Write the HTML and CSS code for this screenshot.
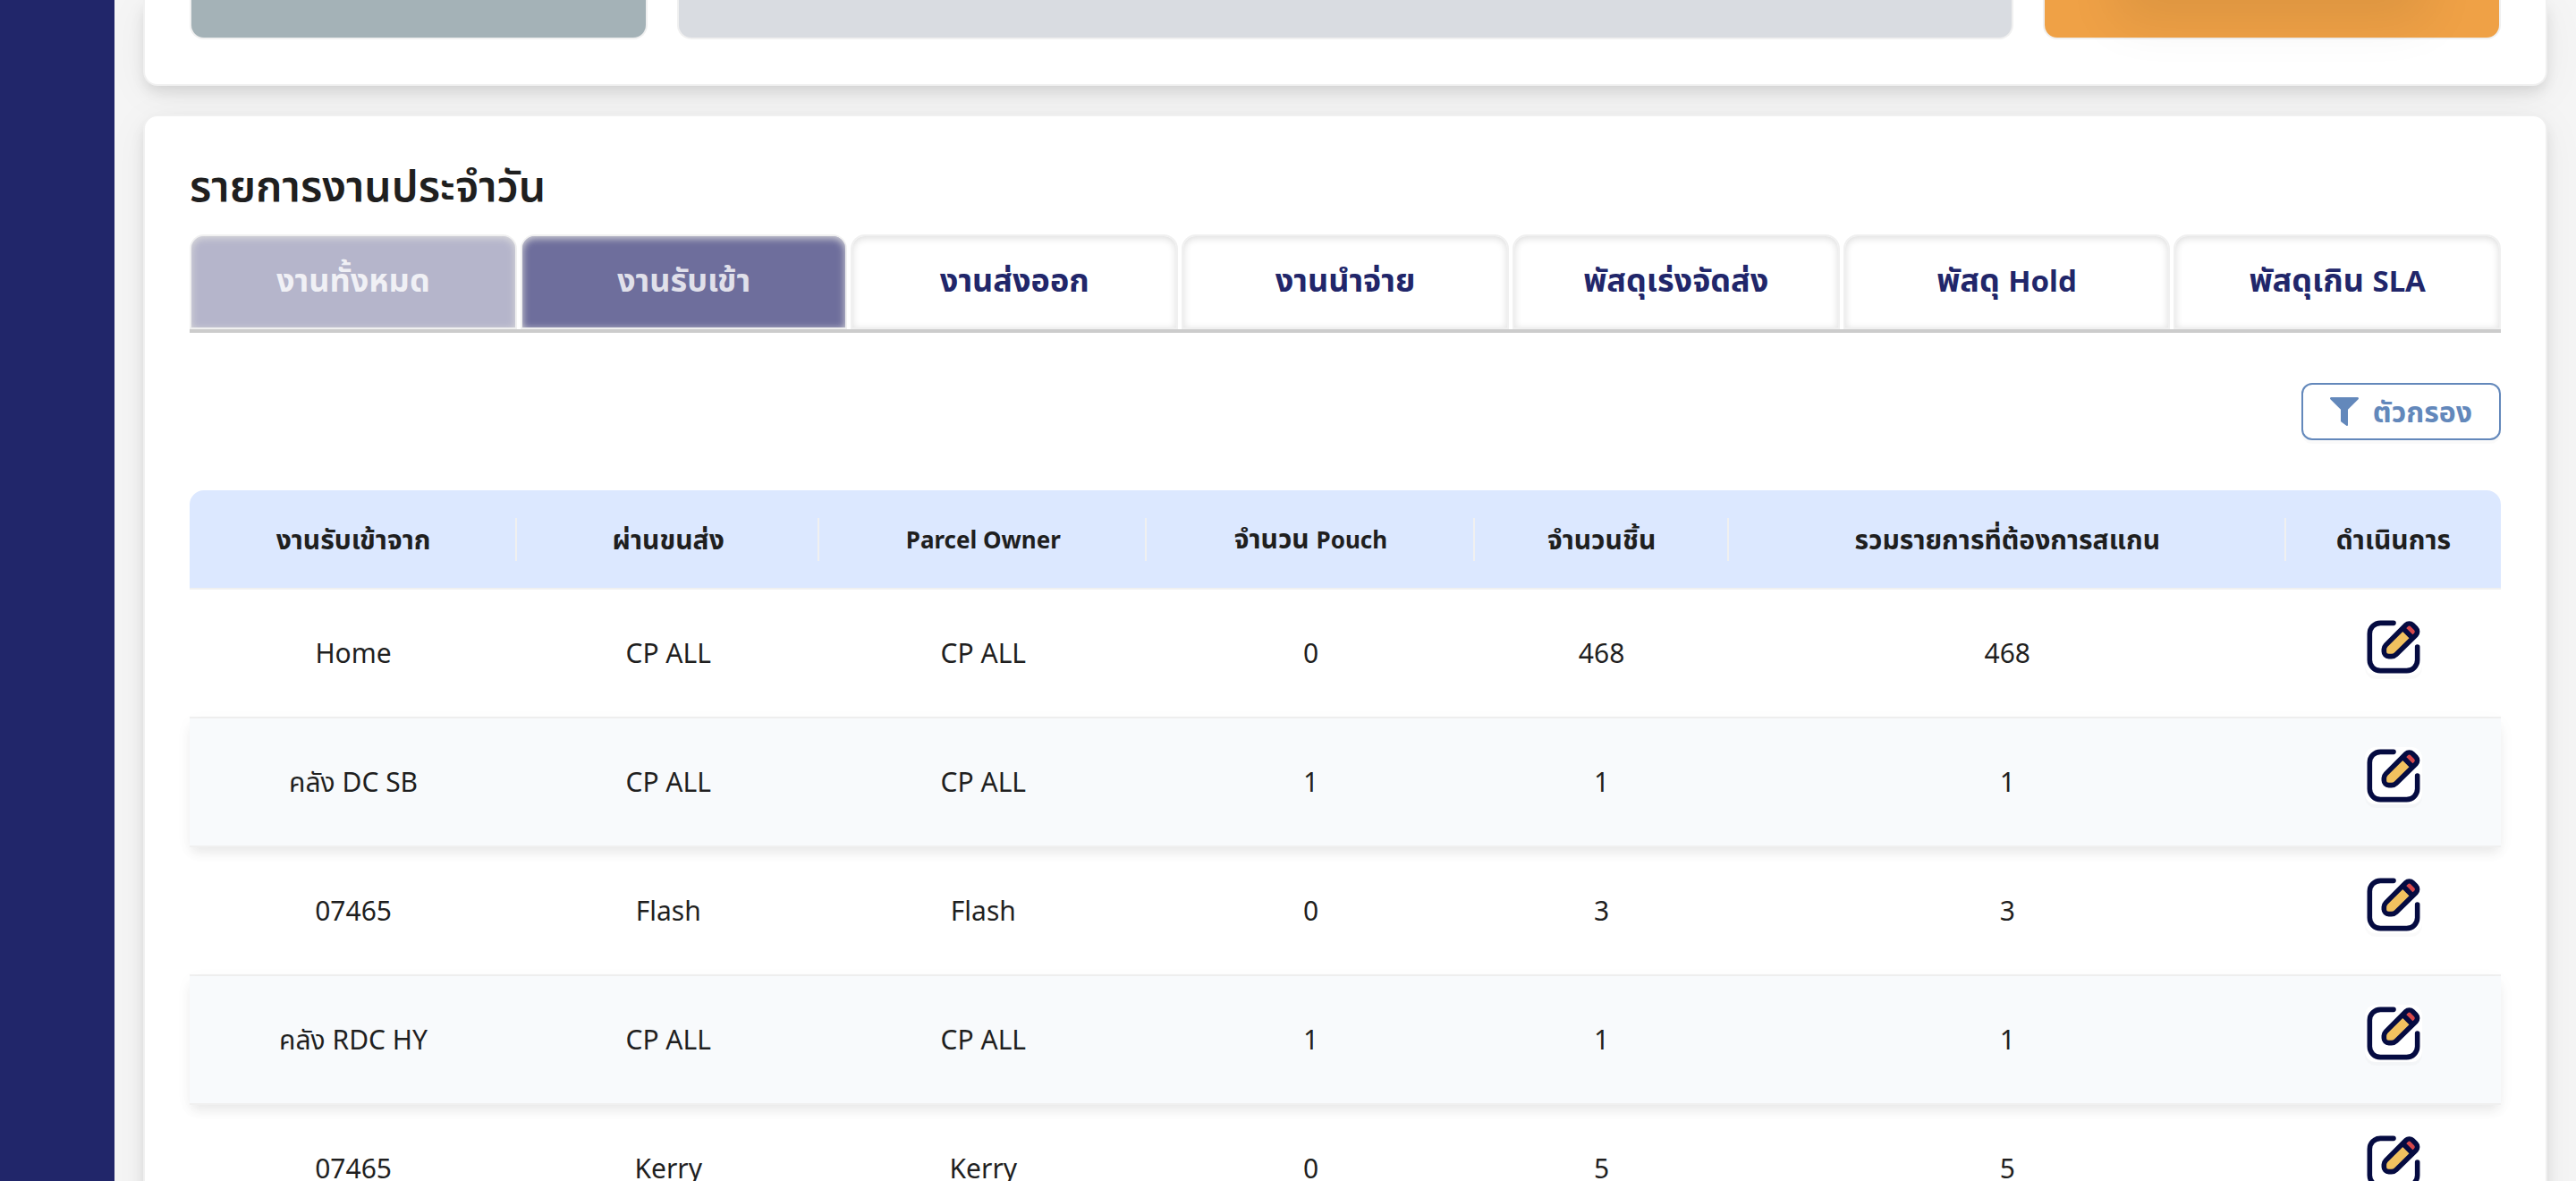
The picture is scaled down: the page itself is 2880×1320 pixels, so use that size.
FILE: index.html
```html
<!DOCTYPE html>
<html lang="th">
<head>
<meta charset="utf-8">
<title>รายการงานประจำวัน</title>
<link rel="stylesheet" href="styles.css">
</head>
<body>
<svg class="sprite" aria-hidden="true">
  <symbol id="edit" viewBox="0 0 24 24">
    <path d="M12 2H6.500a4.500 4.500 0 0 0-4.500 4.500v11a4.500 4.500 0 0 0 4.500 4.500h11a4.500 4.500 0 0 0 4.500-4.500V12" fill="none" stroke="#050b41" stroke-width="2.100" stroke-linecap="round"/>
    <path d="M8.800 11.200L15.850 4.150L20.050 8.350L13.100 15.200a2.800 2.800 0 0 1-2 .8H10a2 2 0 0 1-2-2v-1a2.800 2.800 0 0 1 .8-1.800z" fill="#f1c15f"/>
    <path d="M15.850 4.150L17.200 2.800a2 2 0 0 1 2.800 0L21.400 4.200a2 2 0 0 1 0 2.800L20.050 8.350z" fill="#d5484b"/>
    <path d="M8.800 11.200L17.200 2.800a2 2 0 0 1 2.800 0L21.400 4.200a2 2 0 0 1 0 2.800L13.100 15.200a2.800 2.800 0 0 1-2 .8H10a2 2 0 0 1-2-2v-1a2.800 2.800 0 0 1 .8-1.800zM15.850 4.150L20.050 8.350" fill="none" stroke="#050b41" stroke-width="2.100"/>
  </symbol>
</svg>
<div class="layout">
  <aside class="sidebar"></aside>
  <main class="content">
    <section class="card summary">
      <div class="panel panel-teal"></div>
      <div class="panel panel-grey"></div>
      <div class="panel panel-orange"></div>
    </section>
    <section class="card jobs">
      <h1 class="title">รายการงานประจำวัน</h1>
      <div class="tabs" role="tablist">
        <button class="tab tab-disabled" role="tab" type="button">งานทั้งหมด</button>
        <button class="tab tab-active" role="tab" type="button" aria-selected="true">งานรับเข้า</button>
        <button class="tab" role="tab" type="button">งานส่งออก</button>
        <button class="tab" role="tab" type="button">งานนำจ่าย</button>
        <button class="tab" role="tab" type="button">พัสดุเร่งจัดส่ง</button>
        <button class="tab" role="tab" type="button">พัสดุ <span class="tab-latin">Hold</span></button>
        <button class="tab" role="tab" type="button">พัสดุเกิน <span class="tab-latin">SLA</span></button>
      </div>
      <div class="toolbar">
        <button class="filter" type="button">
          <svg class="filter-icon" viewBox="0 0 32 32" aria-hidden="true"><path d="M1.500 0h29a1.300 1.300 0 0 1 1.100 2.200L20 13.800V31a1 1 0 0 1-1.700.7L12.500 27.500a1.500 1.500 0 0 1-.5-1.200V13.800L.4 2.200A1.300 1.300 0 0 1 1.500 0z" fill="currentColor"/></svg>
          <span>ตัวกรอง</span>
        </button>
      </div>
      <table class="table">
        <colgroup>
          <col class="col-from"><col class="col-via"><col class="col-owner"><col class="col-pouch"><col class="col-pieces"><col class="col-total"><col class="col-action">
        </colgroup>
        <thead>
          <tr><th>งานรับเข้าจาก</th><th>ผ่านขนส่ง</th><th><span class="th-latin">Parcel Owner</span></th><th>จำนวน <span class="th-latin">Pouch</span></th><th>จำนวนชิ้น</th><th>รวมรายการที่ต้องการสแกน</th><th>ดำเนินการ</th></tr>
        </thead>
        <tbody>
          <tr><td>Home</td><td>CP ALL</td><td>CP ALL</td><td>0</td><td>468</td><td>468</td><td class="action"><button class="edit" type="button" aria-label="ดำเนินการ"><svg><use href="#edit"/></svg></button></td></tr>
          <tr><td>คลัง DC SB</td><td>CP ALL</td><td>CP ALL</td><td>1</td><td>1</td><td>1</td><td class="action"><button class="edit" type="button" aria-label="ดำเนินการ"><svg><use href="#edit"/></svg></button></td></tr>
          <tr><td>07465</td><td>Flash</td><td>Flash</td><td>0</td><td>3</td><td>3</td><td class="action"><button class="edit" type="button" aria-label="ดำเนินการ"><svg><use href="#edit"/></svg></button></td></tr>
          <tr><td>คลัง RDC HY</td><td>CP ALL</td><td>CP ALL</td><td>1</td><td>1</td><td>1</td><td class="action"><button class="edit" type="button" aria-label="ดำเนินการ"><svg><use href="#edit"/></svg></button></td></tr>
          <tr><td>07465</td><td>Kerry</td><td>Kerry</td><td>0</td><td>5</td><td>5</td><td class="action"><button class="edit" type="button" aria-label="ดำเนินการ"><svg><use href="#edit"/></svg></button></td></tr>
        </tbody>
      </table>
    </section>
  </main>
</div>
</body>
</html>
```
FILE: styles.css
```css
*, *::before, *::after { box-sizing: border-box; }
body {
  margin: 0;
  background: #f5f5f5;
  color: #1f1f1f;
  font-family: "Noto Sans", "Noto Sans Thai", sans-serif;
  font-size: 30px;
  line-height: 48px;
}
button { font-family: inherit; line-height: 48px; cursor: pointer; }
.sprite { display: none; }
.layout { display: flex; height: 100vh; overflow: hidden; }
.sidebar { flex: 0 0 128px; background: #21266a; }
.content {
  flex: 1;
  min-width: 0;
  display: flex;
  flex-direction: column;
  gap: 32px;
  padding: 0 32px;
}
.card {
  flex: none;
  background: #fff;
  border: 2px solid #f0f0f0;
  border-radius: 16px;
  box-shadow: 0 8px 16px -2px rgba(0, 0, 0, .12), 0 8px 48px rgba(0, 0, 0, .05);
}
.summary {
  display: grid;
  grid-template-columns: 512fr 1494fr 512fr;
  gap: 33px;
  padding: 0 50px 50px;
  border-top: 0;
  border-radius: 0 0 16px 16px;
}
.panel {
  height: 44px;
  border: 2px solid #f0f0f0;
  border-top: 0;
  border-radius: 0 0 16px 16px;
}
.panel-teal { background: #a4b2b7; }
.panel-grey { background: #d9dce1; }
.panel-orange { position: relative; background: #efa146; }
.panel-orange::after {
  content: "";
  position: absolute;
  bottom: 100%;
  left: 16%;
  right: 16%;
  height: 64px;
  box-shadow: 0 20px 60px rgba(0, 0, 0, .09);
}
.jobs { padding: 48px 50px; }
.title { margin: 0 0 26px; font-size: 48px; line-height: 58px; font-weight: 600; }
.tabs { display: flex; gap: 4px; border-bottom: 4px solid #ccc; }
.tab {
  flex: 1 1 0;
  height: 106px;
  padding: 0 0 4px;
  border: 2px solid #f0f0f0;
  border-radius: 16px 16px 0 0;
  background: #fff;
  box-shadow: inset 0 2px 8px #dcdcdc;
  color: #21266a;
  font-size: 36px;
  font-weight: 700;
}
.tab-latin { font-size: 33px; }
.tab-disabled { background: #b5b5cb; color: #f0f0f5; }
.tab-active { background: #6e6e9c; color: #e0e0ea; }
.toolbar { display: flex; justify-content: flex-end; padding: 56px 0; }
.filter {
  display: flex;
  align-items: center;
  gap: 16px;
  height: 64px;
  padding: 0 30px;
  border: 2px solid #6388bb;
  border-radius: 12px;
  background: #fff;
  box-shadow: 0 4px 0 rgba(0, 0, 0, .02);
  color: #6388bb;
  font-size: 32px;
  font-weight: 700;
}
.filter-icon { width: 32px; height: 32px; }
.table { width: 100%; table-layout: fixed; border-collapse: separate; border-spacing: 0; text-align: center; }
.col-from, .col-owner, .col-pouch { width: 366px; }
.col-via { width: 338px; }
.col-pieces { width: 284px; }
.col-total { width: 623px; }
.col-action { width: 240px; }
th {
  position: relative;
  height: 111px;
  padding: 0;
  background: #dce8ff;
  border-bottom: 2px solid #f0f0f0;
  font-size: 30px;
  font-weight: 700;
}
.th-latin { font-size: 26px; }
th:first-child { border-top-left-radius: 16px; }
th:last-child { border-top-right-radius: 16px; }
th:not(:last-child)::after {
  content: "";
  position: absolute;
  right: 0;
  top: 31px;
  width: 2px;
  height: 48px;
  background: #f0f0f0;
}
td { height: 144px; padding: 0; border-bottom: 2px solid #f0f0f0; }
tbody tr:nth-child(even) {
  background: #f8fafc;
  box-shadow: 0 8px 12px -2px rgba(0, 0, 0, .07), 0 4px 20px rgba(0, 0, 0, .03);
}
.action { padding-top: 32px; vertical-align: top; }
.edit {
  display: block;
  width: 64px;
  height: 64px;
  margin: 0 auto;
  padding: 0;
  border: 0;
  border-radius: 12px;
  background: #fff;
  box-shadow: 0 4px 0 rgba(0, 0, 0, .02);
}
.edit svg { display: block; width: 64px; height: 64px; }
```
